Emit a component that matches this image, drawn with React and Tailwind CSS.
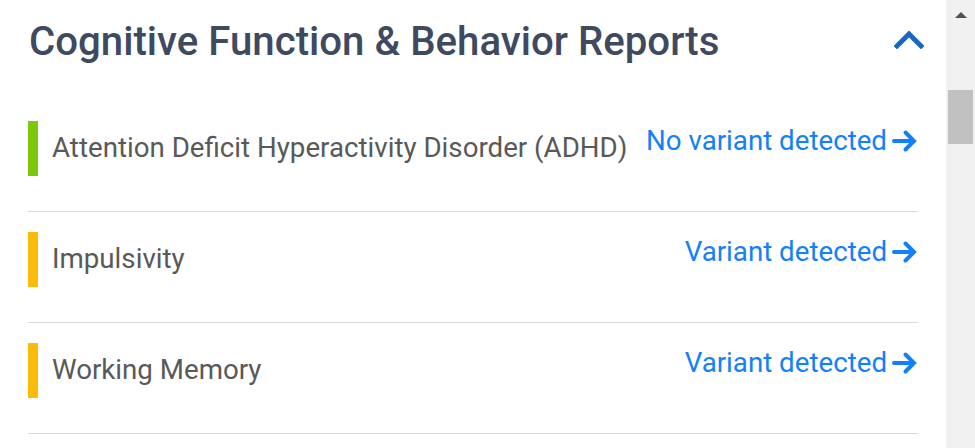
import React from "react";

const rows = [
  { label: "Attention Deficit Hyperactivity Disorder (ADHD)", status: "No variant detected", color: "bg-[#7cc70a]" },
  { label: "Impulsivity", status: "Variant detected", color: "bg-[#fbbb08]" },
  { label: "Working Memory", status: "Variant detected", color: "bg-[#fbbb08]" },
];

function Arrow() {
  return (
    <svg width="26" height="24" viewBox="0 0 26 24" className="ml-[5px]" fill="none">
      <path d="M2 12 H21" stroke="#1280fc" strokeWidth="4" strokeLinecap="round" />
      <path d="M13.5 3.5 L22 12 L13.5 20.5" stroke="#1280fc" strokeWidth="4" strokeLinecap="round" strokeLinejoin="miter" />
    </svg>
  );
}

export default function App() {
  return (
    <div className="flex h-[448px] w-[975px] overflow-hidden bg-white" style={{ fontFamily: "Roboto, 'Liberation Sans', sans-serif" }}>
      <div className="flex-1 px-7">
        <div className="flex items-center justify-between pt-[18px] pb-[36px]">
          <h1 className="text-[40.2px] leading-[47px] font-medium text-[#3e4a60] pl-[1px]">
            Cognitive Function &amp; Behavior Reports
          </h1>
          <svg width="30" height="20" viewBox="0 0 30 20" className="mr-[-6px] mt-[-6px]" fill="none">
            <path d="M3 17 L15 5 L27 17" stroke="#1766c4" strokeWidth="4.8" strokeLinecap="square" />
          </svg>
        </div>
        {rows.map((r) => (
          <div key={r.label} className="flex items-start justify-between pt-5 pb-[35px] border-b border-[#d9d9d9]">
            <div className="flex items-center h-[55px]">
              <div className={`w-[10px] h-[55px] ${r.color}`} />
              <span className="ml-[14px] mt-[-2px] text-[27.7px] leading-[32px] text-[#595959]">{r.label}</span>
            </div>
            <div className="flex items-center mt-[4px] text-[27.7px] leading-[32px] text-[#1280fc]">
              <span>{r.status}</span>
              <Arrow />
            </div>
          </div>
        ))}
      </div>
      <div className="w-[29px] h-full bg-[#f0f0f0] flex flex-col items-center">
        <div className="h-[28px] flex items-center justify-center">
          <div className="w-0 h-0 border-l-[6px] border-r-[6px] border-b-[6px] border-l-transparent border-r-transparent border-b-[#505050] mt-[2px]" />
        </div>
        <div className="mt-[62px] w-[25px] h-[54px] bg-[#c1c1c1]" />
      </div>
    </div>
  );
}
